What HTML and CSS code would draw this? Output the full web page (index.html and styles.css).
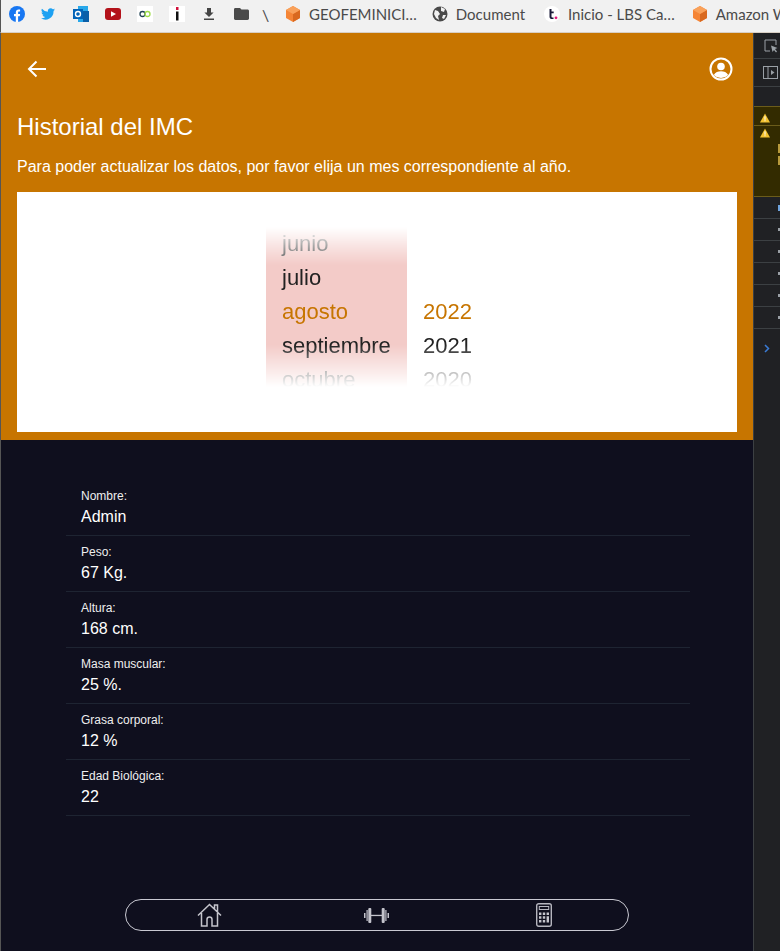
FILE: index.html
```html
<!DOCTYPE html>
<html lang="es">
<head>
<meta charset="utf-8">
<title>Historial del IMC</title>
<link rel="stylesheet" href="styles.css">
</head>
<body>
<nav class="bookmarks">
  <span class="fav"><svg width="16" height="16" viewBox="0 0 16 16"><circle cx="8" cy="8" r="8" fill="#1877f2"/><path d="M6.800 16V10.200H5V8h1.800V6.400C6.800 4.500 7.900 3.500 9.600 3.500c.8 0 1.500.1 1.500.1v1.900h-.9c-.9 0-1.100.5-1.100 1.100V8h2l-.3 2.200H9.100V16z" fill="#fff"/></svg></span>
  <span class="fav tw"><svg width="14" height="12" viewBox="0 0 24 20"><path d="M24 2.400c-.9.4-1.800.7-2.800.8 1-.6 1.800-1.600 2.200-2.700-1 .6-2 1-3.100 1.200A4.900 4.900 0 0 0 11.900 6.200 14 14 0 0 1 1.700.9a4.900 4.900 0 0 0 1.500 6.600c-.8 0-1.600-.2-2.200-.6 0 2.400 1.700 4.400 3.900 4.900-.7.2-1.500.2-2.200.1.600 2 2.400 3.400 4.600 3.400A9.900 9.900 0 0 1 0 17.300 14 14 0 0 0 21.500 4.900c1-.7 1.800-1.500 2.500-2.500z" fill="#1da1f2"/></svg></span>
  <span class="fav"><svg width="16" height="16" viewBox="0 0 16 16"><rect x="5" y="0" width="10" height="16" fill="#28a8ea"/><rect x="10" y="5" width="6" height="11" fill="#0a5fa8"/><rect x="0" y="3" width="10" height="10" fill="#0364b8"/><circle cx="5" cy="8" r="2.500" fill="none" stroke="#fff" stroke-width="1.400"/></svg></span>
  <span class="fav"><svg width="16" height="12" viewBox="0 0 16 12"><rect width="16" height="12" rx="3" fill="#b3121a"/><path d="M6 3.300v5.400L11 6z" fill="#fff"/></svg></span>
  <span class="fav"><svg width="16" height="16" viewBox="0 0 16 16"><rect width="16" height="16" fill="#fff"/><circle cx="5.500" cy="8" r="2.500" fill="none" stroke="#245" stroke-width="1.300"/><circle cx="10.500" cy="8" r="2.500" fill="none" stroke="#9ddc4a" stroke-width="1.300"/></svg></span>
  <span class="fav"><svg width="16" height="16" viewBox="0 0 16 16"><rect width="16" height="16" fill="#fff"/><rect x="7" y="1" width="2.500" height="3" fill="#d0103a"/><rect x="7" y="5.500" width="2.500" height="9" fill="#111"/></svg></span>
  <span class="fav"><svg width="12" height="12" viewBox="0 0 12 12"><path d="M4 0h4v4.500h2.600L6 9 1.400 4.500H4zM1 10.600h10V12H1z" fill="#444"/></svg></span>
  <span class="fav"><svg width="15" height="12" viewBox="0 0 15 12"><path d="M1.400 0h4.600l1.500 1.500h6c.8 0 1.500.6 1.500 1.400v7.700c0 .8-.7 1.400-1.500 1.400H1.400C.6 12 0 11.400 0 10.600V1.400C0 .6.600 0 1.400 0z" fill="#4a4a4a"/></svg></span>
  <span class="slash">\</span>
  <span class="mark first"><svg class="cube" width="16" height="16" viewBox="0 0 16 16"><path d="M8 0l7 4v8l-7 4-7-4V4z" fill="#f58536"/><path d="M8 8l7-4v8l-7 4z" fill="#d9691f"/><path d="M8 0l7 4-7 4-7-4z" fill="#f9a15a"/></svg><span>GEOFEMINICI…</span></span>
  <span class="mark doc"><svg class="cube" width="16" height="16" viewBox="0 0 16 16"><circle cx="8" cy="8" r="7.500" fill="#4a4a4a"/><path d="M3 4l3 1 2 3-2 2 1 4-3-2-2-4zM9 1l4 2-1 3-3-1zM11 9l3 0-2 4-2-1z" fill="#f1f1f1"/></svg><span>Document</span></span>
  <span class="mark lbs"><svg class="cube" width="16" height="16" viewBox="0 0 16 16"><circle cx="8" cy="8" r="8" fill="#fff"/><path d="M5.500 3h2v2.500h2.200v1.800H7.500v3.400c0 .7.500.9 2 .7V13c-2.700.3-4-.3-4-2.200z" fill="#1c1c3a"/><circle cx="12" cy="11.800" r="1.400" fill="#e6197a"/></svg><span>Inicio - LBS Ca…</span></span>
  <span class="mark amz"><svg class="cube" width="16" height="16" viewBox="0 0 16 16"><path d="M8 0l7 4v8l-7 4-7-4V4z" fill="#f58536"/><path d="M8 8l7-4v8l-7 4z" fill="#d9691f"/><path d="M8 0l7 4-7 4-7-4z" fill="#f9a15a"/></svg><span>Amazon W</span></span>
</nav>

<div class="window">
  <main class="app">
    <section class="hero">
      <header class="toolbar">
        <svg class="back" width="22" height="22" viewBox="0 0 22 22"><path d="M20 11H3M10.500 3.500 3 11l7.500 7.500" fill="none" stroke="#fff" stroke-width="2"/></svg>
        <svg class="user" width="24" height="24" viewBox="0 0 24 24"><circle cx="12" cy="12" r="10.500" fill="none" stroke="#fff" stroke-width="2"/><circle cx="12" cy="9.500" r="3.800" fill="#fff"/><path d="M4.800 18c1.500-2.800 4.200-3.800 7.200-3.800s5.700 1 7.200 3.800a10 10 0 0 1-14.400 0z" fill="#fff"/></svg>
      </header>
      <h1>Historial del IMC</h1>
      <p class="intro">Para poder actualizar los datos, por favor elija un mes correspondiente al año.</p>
      <div class="picker">
        <div class="col months">
          <div class="opt">junio</div>
          <div class="opt dark">julio</div>
          <div class="opt sel">agosto</div>
          <div class="opt dark">septiembre</div>
          <div class="opt">octubre</div>
        </div>
        <div class="col years">
          <div class="opt sel">2022</div>
          <div class="opt dark">2021</div>
          <div class="opt">2020</div>
        </div>
      </div>
    </section>

    <section class="data">
      <div class="row"><div class="label">Nombre:</div><div class="value">Admin</div></div>
      <div class="row"><div class="label">Peso:</div><div class="value">67 Kg.</div></div>
      <div class="row"><div class="label">Altura:</div><div class="value">168 cm.</div></div>
      <div class="row"><div class="label">Masa muscular:</div><div class="value">25 %.</div></div>
      <div class="row"><div class="label">Grasa corporal:</div><div class="value">12 %</div></div>
      <div class="row"><div class="label">Edad Biológica:</div><div class="value">22</div></div>
    </section>

    <footer class="tabs">
      <svg width="25" height="24" viewBox="0 0 25 24"><path d="M1 12.500 12.500 1.500 24 12.500M4.500 10v13h5.500v-6.500a2.500 2.500 0 0 1 5 0V23h5.500V10M17.500 5.800V2h3v7" fill="none" stroke="#c4c4cc" stroke-width="1.500"/></svg>
      <svg width="25" height="15" viewBox="0 0 25 15"><path d="M0 5h1.500v5H0zM23.500 5H25v5h-1.500z" fill="#c4c4cc"/><rect x="2.500" y="2" width="1.200" height="11" fill="#c4c4cc"/><rect x="4.300" y="0" width="3" height="15" rx="1" fill="#c4c4cc"/><rect x="17.700" y="0" width="3" height="15" rx="1" fill="#c4c4cc"/><rect x="21.300" y="2" width="1.200" height="11" fill="#c4c4cc"/><rect x="7" y="6.800" width="11" height="1.300" fill="#c4c4cc"/></svg>
      <svg width="16" height="24" viewBox="0 0 16 24"><rect x=".7" y=".7" width="14.600" height="22.600" rx="2" fill="none" stroke="#b5b5be" stroke-width="1.400"/><rect x="3.300" y="3.500" width="9.400" height="3" fill="none" stroke="#b5b5be"/><path d="M3 9.500h2.400v2.400H3zM6.800 9.500h2.400v2.400H6.800zM3 13.300h2.400v2.400H3zM6.800 13.300h2.400v2.400H6.800zM3 17.100h2.400v2.400H3zM6.800 17.100h2.400v2.400H6.800z" fill="#c4c4cc"/><path d="M10.600 9.500H13v2.400h-2.400zM10.600 13.300H13v6.200h-2.400z" fill="#c4c4cc"/></svg>
    </footer>
  </main>

  <aside class="devtools">
    <div class="tool"><svg width="14" height="14" viewBox="0 0 14 14"><path d="M6 12H1V1h11v5" fill="none" stroke="#9aa0a6"/><path d="M7 6.500l6.500 2.500-2.500 1 2 2.500-1 1-2-2.500-1.500 2z" fill="#9aa0a6"/></svg></div>
    <div class="tool tall"><svg width="15" height="13" viewBox="0 0 15 13"><rect x=".5" y=".5" width="14" height="12" fill="none" stroke="#9aa0a6"/><path d="M5 .5v12" stroke="#9aa0a6"/><path d="M8 4v5l3.500-2.500z" fill="#9aa0a6"/></svg></div>
    <div class="blank"></div>
    <div class="warn short"><svg width="10" height="10" viewBox="0 0 12 11"><path d="M6 0l6 11H0z" fill="#f2c230"/><path d="M5.400 3.500h1.200v4H5.400zM5.400 8.300h1.200v1.200H5.400z" fill="#fff"/></svg></div>
    <div class="warn long"><svg width="10" height="10" viewBox="0 0 12 11"><path d="M6 0l6 11H0z" fill="#f2c230"/><path d="M5.400 3.500h1.200v4H5.400zM5.400 8.300h1.200v1.200H5.400z" fill="#fff"/></svg><i class="bit amber"></i><i class="bit amber"></i></div>
    <div class="line first-line"><i class="bit blue"></i></div>
    <div class="line"><i class="bit"></i></div>
    <div class="line"><i class="bit"></i></div>
    <div class="line"><i class="bit"></i></div>
    <div class="line"><i class="bit"></i></div>
    <div class="line"><i class="bit"></i></div>
    <div class="chev"><svg width="6" height="9" viewBox="0 0 6 9"><path d="M1 1l3.500 3.500L1 8" fill="none" stroke="#3a7bd5" stroke-width="1.500"/></svg></div>
  </aside>
</div>
</body>
</html>
```

FILE: styles.css
```css
* { box-sizing: border-box; }
html, body { margin: 0; height: 100%; }
body {
  width: 780px;
  height: 951px;
  overflow: hidden;
  background: #0f0f1e;
  font-family: "Liberation Sans", Arial, sans-serif;
  display: flex;
  flex-direction: column;
}
.bookmarks {
  height: 33px;
  flex: none;
  display: flex;
  align-items: center;
  padding-bottom: 4px;
  background: #f1f1f1;
  border-bottom: 1px solid #d8cfc4;
  border-left: 1px solid #555;
  font-family: Lato, "Open Sans", sans-serif;
  font-size: 15px;
  color: #4a4a4a;
  white-space: nowrap;
  overflow: hidden;
}
.fav { width: 32px; flex: none; display: flex; justify-content: center; }
.fav.tw { margin-left: -1px; margin-right: 1px; }
.slash { flex: none; margin-left: 5px; width: 8px; font-size: 16px; }
.mark { display: flex; align-items: center; gap: 8px; flex: none; }
.cube { flex: none; }
.mark.first { margin-left: 15px; }
.mark.doc { margin-left: 15px; }
.mark.lbs { margin-left: 19px; }
.mark.amz { margin-left: 17px; }
.window { flex: 1; display: flex; min-height: 0; }
.app {
  width: 753px;
  flex: none;
  display: flex;
  flex-direction: column;
  border-left: 1px solid #555;
  background: #0f0f1e;
}
.hero { background: #c77500; height: 407px; padding: 0 16px; flex: none; color: #fff; }
.toolbar { height: 70px; display: flex; align-items: center; justify-content: space-between; padding: 2px 4px 0 9px; }
h1 { margin: 10px 0 0; font-weight: 400; font-size: 24px; line-height: 28px; }
.intro { margin: 16px 0 0; font-size: 16px; line-height: 20px; }
.picker {
  margin-top: 15px;
  height: 240px;
  background: #fff;
  display: flex;
  padding: 35px 0 0 249px;
  color: #222;
}
.col {
  height: 172px;
  overflow: hidden;
  -webkit-mask-image: linear-gradient(to bottom, transparent 0, rgba(0,0,0,.55) 20px, #000 38px, #000 118px, rgba(0,0,0,.35) 146px, transparent 160px);
  mask-image: linear-gradient(to bottom, transparent 0, rgba(0,0,0,.55) 20px, #000 38px, #000 118px, rgba(0,0,0,.35) 146px, transparent 160px);
  font-size: 22px;
}
.months { width: 141px; padding-left: 16px; background: #f3cbc8; }
.years { width: 90px; padding: 68px 0 0 16px; }
.opt { height: 34px; line-height: 34px; color: #555; white-space: nowrap; }
.opt.dark { color: #222; }
.opt.sel { color: #c77500; }
.data { margin: 40px 63px 0 65px; color: #fff; }
.row { height: 56px; padding: 9px 0 0 15px; border-bottom: 1px solid #1e2432; }
.label { font-size: 12px; line-height: 14px; color: #eee; }
.value { font-size: 16px; line-height: 20px; margin-top: 4px; }
.tabs {
  margin: 83px 0 0 124px;
  width: 504px;
  height: 32px;
  border: 1px solid #c9c9d2;
  border-radius: 16px;
  display: grid;
  grid-template-columns: repeat(3, 1fr);
  justify-items: center;
  align-items: center;
}
.devtools { flex: 1; background: #202124; border-left: 1px solid #3c4043; display: flex; flex-direction: column; overflow: hidden; }
.tool { height: 26px; display: flex; align-items: center; padding-left: 10px; border-bottom: 1px solid #3c4043; }
.tool.tall { height: 28px; padding-left: 9px; }
.blank { height: 19px; }
.warn { border-top: 1px solid #6b5c1a; background: #332b00; padding: 2px 0 0 6px; position: relative; }
.warn.short { height: 19px; }
.warn.long { height: 72px; border-bottom: 1px solid #6b5c1a; display: flex; flex-direction: column; }
.warn.long .bit { width: 2px; height: 9px; margin: 3px 0 0 18px; background: #b89a3c; }
.warn.long svg + .bit { margin-top: 6px; }
.line { height: 22px; border-bottom: 1px solid #3c4043; flex: none; display: flex; justify-content: flex-end; align-items: center; }
.bit { display: block; width: 2px; height: 3px; background: #9aa0a6; }
.bit.blue { background: #6ea3dd; height: 6px; }
.chev { padding: 10px 0 0 10px; }
```
